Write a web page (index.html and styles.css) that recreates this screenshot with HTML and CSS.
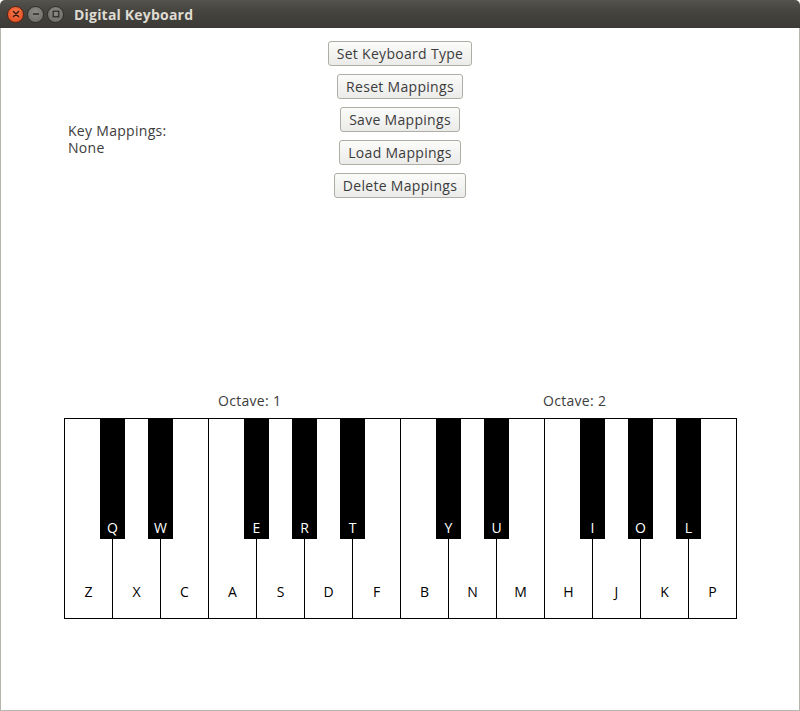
FILE: index.html
```html
<!DOCTYPE html>
<html>
<head>
<meta charset="utf-8">
<link rel="stylesheet" href="styles.css">
</head>
<body>
<div class="window">
  <div class="titlebar">
    <div class="controls">
      <span class="ctl close"><svg width="10" height="10" viewBox="0 0 10 10"><path d="M2.5 2.5 L7.5 7.5 M7.5 2.5 L2.5 7.5" stroke="#3a1a10" stroke-width="1.5" stroke-linecap="round"/></svg></span>
      <span class="ctl"><svg width="10" height="10" viewBox="0 0 10 10"><path d="M2 5 H8" stroke="#2e2d2a" stroke-width="1.5"/></svg></span>
      <span class="ctl"><svg width="10" height="10" viewBox="0 0 10 10"><rect x="2.2" y="2.2" width="5.6" height="5.6" fill="none" stroke="#2e2d2a" stroke-width="1.3"/></svg></span>
    </div>
    <div class="title">Digital Keyboard</div>
  </div>
  <div class="content">
    <div class="top">
      <div class="mappings">Key Mappings:<br>None</div>
      <div class="buttons">
        <button class="btn">Set Keyboard Type</button>
        <button class="btn">Reset Mappings</button>
        <button class="btn">Save Mappings</button>
        <button class="btn">Load Mappings</button>
        <button class="btn">Delete Mappings</button>
      </div>
      <div></div>
    </div>
    <div class="octaves">
      <span class="oct oct1">Octave: 1</span>
      <span class="oct oct2">Octave: 2</span>
    </div>
    <div class="piano">
      <div class="white"><span class="wl">Z</span><div class="black"><span>Q</span></div></div>
      <div class="white"><span class="wl">X</span><div class="black"><span>W</span></div></div>
      <div class="white"><span class="wl">C</span></div>
      <div class="white"><span class="wl">A</span><div class="black"><span>E</span></div></div>
      <div class="white"><span class="wl">S</span><div class="black"><span>R</span></div></div>
      <div class="white"><span class="wl">D</span><div class="black"><span>T</span></div></div>
      <div class="white"><span class="wl">F</span></div>
      <div class="white"><span class="wl">B</span><div class="black"><span>Y</span></div></div>
      <div class="white"><span class="wl">N</span><div class="black"><span>U</span></div></div>
      <div class="white"><span class="wl">M</span></div>
      <div class="white"><span class="wl">H</span><div class="black"><span>I</span></div></div>
      <div class="white"><span class="wl">J</span><div class="black"><span>O</span></div></div>
      <div class="white"><span class="wl">K</span><div class="black"><span>L</span></div></div>
      <div class="white"><span class="wl">P</span></div>
    </div>
  </div>
</div>
</body>
</html>
```
FILE: styles.css
```css
html, body {
  margin: 0;
  padding: 0;
  background: #ffffff;
}
.window {
  width: 800px;
  height: 711px;
  display: flex;
  flex-direction: column;
  font-family: "Open Sans", "DejaVu Sans", sans-serif;
  color: #3c3c3c;
}
.titlebar {
  height: 28px;
  flex: none;
  background: linear-gradient(#55534d, #45443f 40%, #3b3a36);
  border-radius: 5px 5px 0 0;
  display: flex;
  align-items: center;
  box-sizing: border-box;
  padding-left: 7px;
}
.controls {
  display: flex;
  gap: 3px;
}
.ctl {
  width: 17px;
  height: 17px;
  border-radius: 50%;
  background: radial-gradient(circle at 50% 35%, #8d8b85, #6a6862);
  border: 1px solid #2f2e2b;
  display: flex;
  align-items: center;
  justify-content: center;
  box-sizing: border-box;
}
.ctl.close {
  background: radial-gradient(circle at 50% 35%, #f7774a, #e0461d);
  border-color: #5a2410;
}
.title {
  margin-left: 10px;
  font-weight: bold;
  font-size: 14px;
  letter-spacing: 0.2px;
  color: #dfdbd2;
}
.content {
  flex: 1;
  border: 1px solid #b7b6ae;
  border-top: none;
}
.top {
  display: grid;
  grid-template-columns: 1fr auto 1fr;
  padding-top: 13px;
}
.mappings {
  padding-left: 67px;
  padding-top: 81px;
  font-size: 14px;
  line-height: 17px;
  letter-spacing: 0.3px;
  color: #3c3c3c;
}
.buttons {
  display: flex;
  flex-direction: column;
  align-items: center;
  gap: 8px;
}
.btn {
  height: 25px;
  padding: 0 8px;
  font-family: "Open Sans", "DejaVu Sans", sans-serif;
  font-size: 14px;
  letter-spacing: 0.3px;
  color: #3c3c3c;
  background: linear-gradient(#fbfbfa, #ebebe9);
  border: 1px solid #aeada6;
  border-radius: 3px;
  line-height: 23px;
}
.octaves {
  position: relative;
  height: 20px;
  margin-top: 194px;
  font-size: 14px;
  letter-spacing: 0.3px;
  color: #3c3c3c;
}
.oct {
  position: absolute;
  top: 0;
  line-height: 17px;
}
.oct1 { left: 217px; }
.oct2 { left: 542px; }
.piano {
  margin-left: 63px;
  width: 673px;
  height: 201px;
  box-sizing: border-box;
  border: 1px solid #000;
  display: flex;
  margin-top: 6px;
}
.white {
  width: 47px;
  position: relative;
  display: flex;
  justify-content: center;
  align-items: flex-end;
  color: #000;
  font-size: 14px;
}
.white + .white {
  border-left: 1px solid #000;
}
.wl {
  margin-bottom: 17px;
}
.black {
  position: absolute;
  top: 0;
  right: -13px;
  width: 25px;
  height: 120px;
  background: #000;
  z-index: 1;
  display: flex;
  justify-content: center;
  align-items: flex-end;
  color: #fff;
  font-size: 14px;
}
.black span {
  margin-bottom: 2px;
}
```
